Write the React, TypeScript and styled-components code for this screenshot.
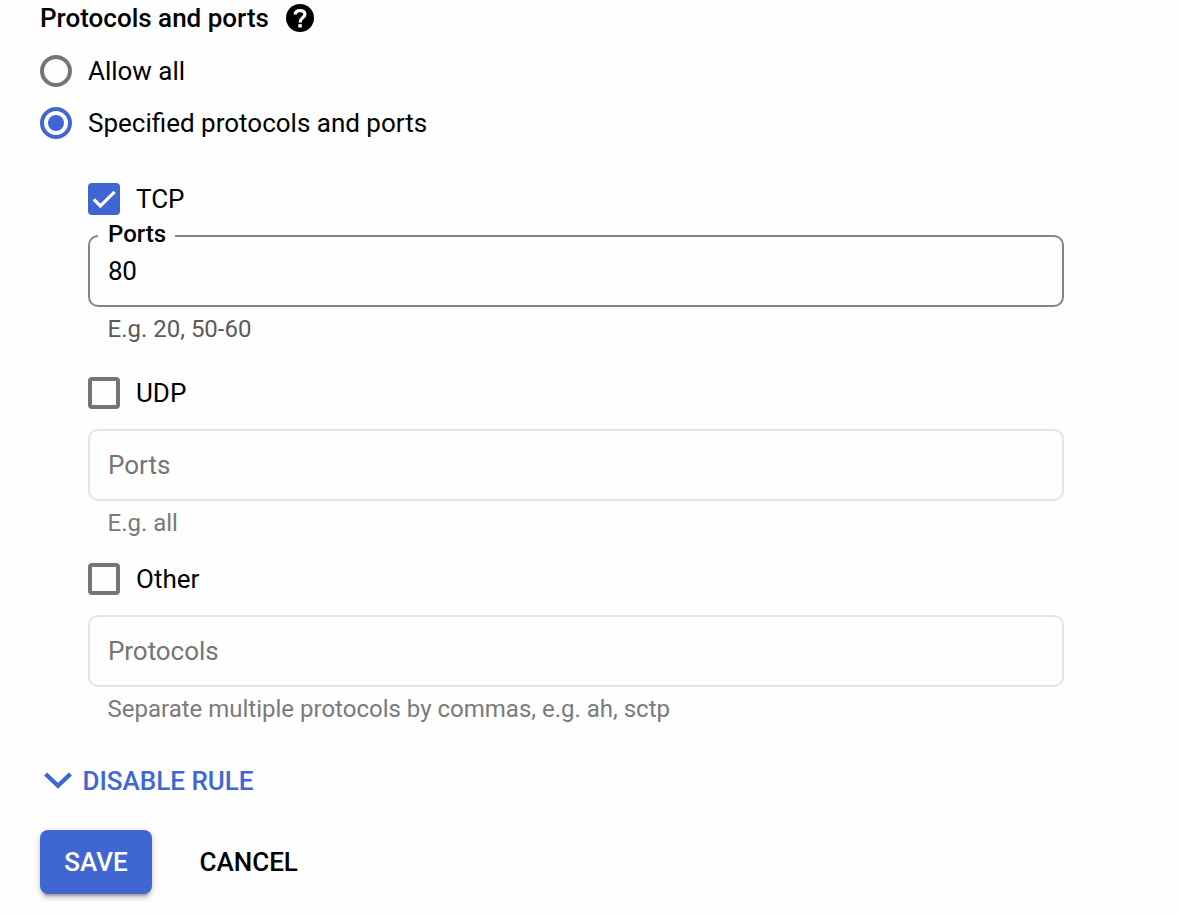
import React from "react";
import styled, { createGlobalStyle } from "styled-components";

const Global = createGlobalStyle`
  * { box-sizing: border-box; }
  body { margin: 0; background: #fefefe; overflow: hidden; }
`;

const blue = "#4067d1";

const Page = styled.form`
  width: 1180px;
  height: 916px;
  padding-left: 40px;
  font-family: Roboto, sans-serif;
  font-size: 26px;
  line-height: 36px;
  color: #000;
  white-space: nowrap;
`;

const Title = styled.h3`
  display: flex;
  align-items: center;
  gap: 17px;
  height: 36px;
  margin: 0 0 9px;
  font-size: 26px;
  font-weight: 500;
`;

const Text = styled.span<{ $ls?: number }>`
  letter-spacing: ${(p) => (p.$ls ? `${p.$ls}px` : "normal")};
`;

const Option = styled.label`
  display: flex;
  align-items: center;
  gap: 16px;
  height: 52px;
`;

const RadioMark = styled.span<{ $on?: boolean }>`
  display: grid;
  place-items: center;
  width: 32px;
  height: 32px;
  border: 4px solid ${(p) => (p.$on ? blue : "#757575")};
  border-radius: 50%;

  &::after {
    content: "";
    width: 16px;
    height: 16px;
    border-radius: 50%;
    background: ${(p) => (p.$on ? blue : "transparent")};
  }
`;

const CheckMark = styled.span<{ $on?: boolean }>`
  display: grid;
  place-items: center;
  width: 32px;
  height: 32px;
  border: ${(p) => (p.$on ? "0" : "4px solid #757575")};
  border-radius: 4px;
  background: ${(p) => (p.$on ? blue : "transparent")};
`;

const Protocols = styled.div`
  width: 976px;
  margin: 24px 0 0 48px;
`;

const Group = styled.section<{ $height: number }>`
  height: ${(p) => p.$height}px;
`;

const Field = styled.div<{ $disabled?: boolean }>`
  position: relative;
  display: flex;
  align-items: center;
  height: 72px;
  margin-top: 10px;
  padding: 0 18px;
  border: 2px solid ${(p) => (p.$disabled ? "#e4e4e4" : "#80868b")};
  border-radius: 10px;
  color: ${(p) => (p.$disabled ? "#757575" : "#000")};
`;

const FloatingLabel = styled.span`
  position: absolute;
  top: -17px;
  left: 8px;
  padding: 0 9px 0 10px;
  background: #fefefe;
  font-size: 24px;
  font-weight: 500;
  line-height: 28px;
`;

const Hint = styled.p<{ $dark?: boolean }>`
  margin: 6px 0 0 19.5px;
  font-size: 24px;
  line-height: 32px;
  color: ${(p) => (p.$dark ? "#5a5a5a" : "#7a7a7a")};
`;

const Expander = styled.div`
  display: flex;
  align-items: center;
  gap: 10.5px;
  height: 36px;
  padding-left: 4px;
  font-weight: 500;
  color: ${blue};
`;

const Actions = styled.div`
  display: flex;
  margin-top: 31px;
  gap: 23.5px;
`;

const Button = styled.button<{ $primary?: boolean }>`
  height: 64px;
  padding: 0 24px;
  border: 0;
  border-radius: 8px;
  font: 500 26px/36px Roboto, sans-serif;
  color: ${(p) => (p.$primary ? "#fff" : "#000")};
  background: ${(p) => (p.$primary ? blue : "transparent")};
  box-shadow: ${(p) =>
    p.$primary
      ? "0 6px 2px -4px rgba(0,0,0,.2), 0 4px 4px rgba(0,0,0,.14), 0 2px 10px rgba(0,0,0,.12)"
      : "none"};
  ${(p) => (p.$primary ? "width: 112px;" : "")}
`;

const HelpIcon = () => (
  <svg width="28" height="28" viewBox="0 0 28 28" fill="none">
    <circle cx="14" cy="14" r="14" fill="#000" />
    <path
      d="M9.3 10.6C9.3 7.9 11.2 6.6 14 6.6S18.9 8 18.9 10.5C18.9 13.6 14.1 13.8 14.1 18.4"
      stroke="#fff"
      strokeWidth="3.3"
    />
    <path d="M12.3 20.2h3.6v3.3h-3.6z" fill="#fff" />
  </svg>
);

const TickIcon = () => (
  <svg width="32" height="32" viewBox="0 0 32 32" fill="none" stroke="#fff" strokeWidth="3.2">
    <path d="M5.8 16.4 12.4 23 26.6 8.8" />
  </svg>
);

const ChevronIcon = () => (
  <svg width="28" height="18" viewBox="0 0 28 18" fill="none" stroke={blue} strokeWidth="4.4">
    <path d="M1.6 2 14 13.8 26.4 2" />
  </svg>
);

export default function App() {
  return (
    <>
      <Global />
      <Page>
        <Title>
          <Text>Protocols and ports</Text>
          <HelpIcon />
        </Title>
        <Option>
          <RadioMark />
          <Text $ls={-0.02}>Allow all</Text>
        </Option>
        <Option>
          <RadioMark $on />
          <Text>Specified protocols and ports</Text>
        </Option>
        <Protocols>
          <Group $height={194}>
            <Option>
              <CheckMark $on>
                <TickIcon />
              </CheckMark>
              <Text>TCP</Text>
            </Option>
            <Field>
              <FloatingLabel>Ports</FloatingLabel>
              <Text $ls={-0.3}>80</Text>
            </Field>
            <Hint $dark>E.g. 20, 50-60</Hint>
          </Group>
          <Group $height={186}>
            <Option>
              <CheckMark />
              <Text>UDP</Text>
            </Option>
            <Field $disabled>
              <Text>Ports</Text>
            </Field>
            <Hint>E.g. all</Hint>
          </Group>
          <Group $height={210}>
            <Option>
              <CheckMark />
              <Text>Other</Text>
            </Option>
            <Field $disabled>
              <Text $ls={-0.05}>Protocols</Text>
            </Field>
            <Hint>Separate multiple protocols by commas, e.g. ah, sctp</Hint>
          </Group>
        </Protocols>
        <Expander>
          <ChevronIcon />
          <Text>DISABLE RULE</Text>
        </Expander>
        <Actions>
          <Button type="button" $primary>
            SAVE
          </Button>
          <Button type="button">CANCEL</Button>
        </Actions>
      </Page>
    </>
  );
}
